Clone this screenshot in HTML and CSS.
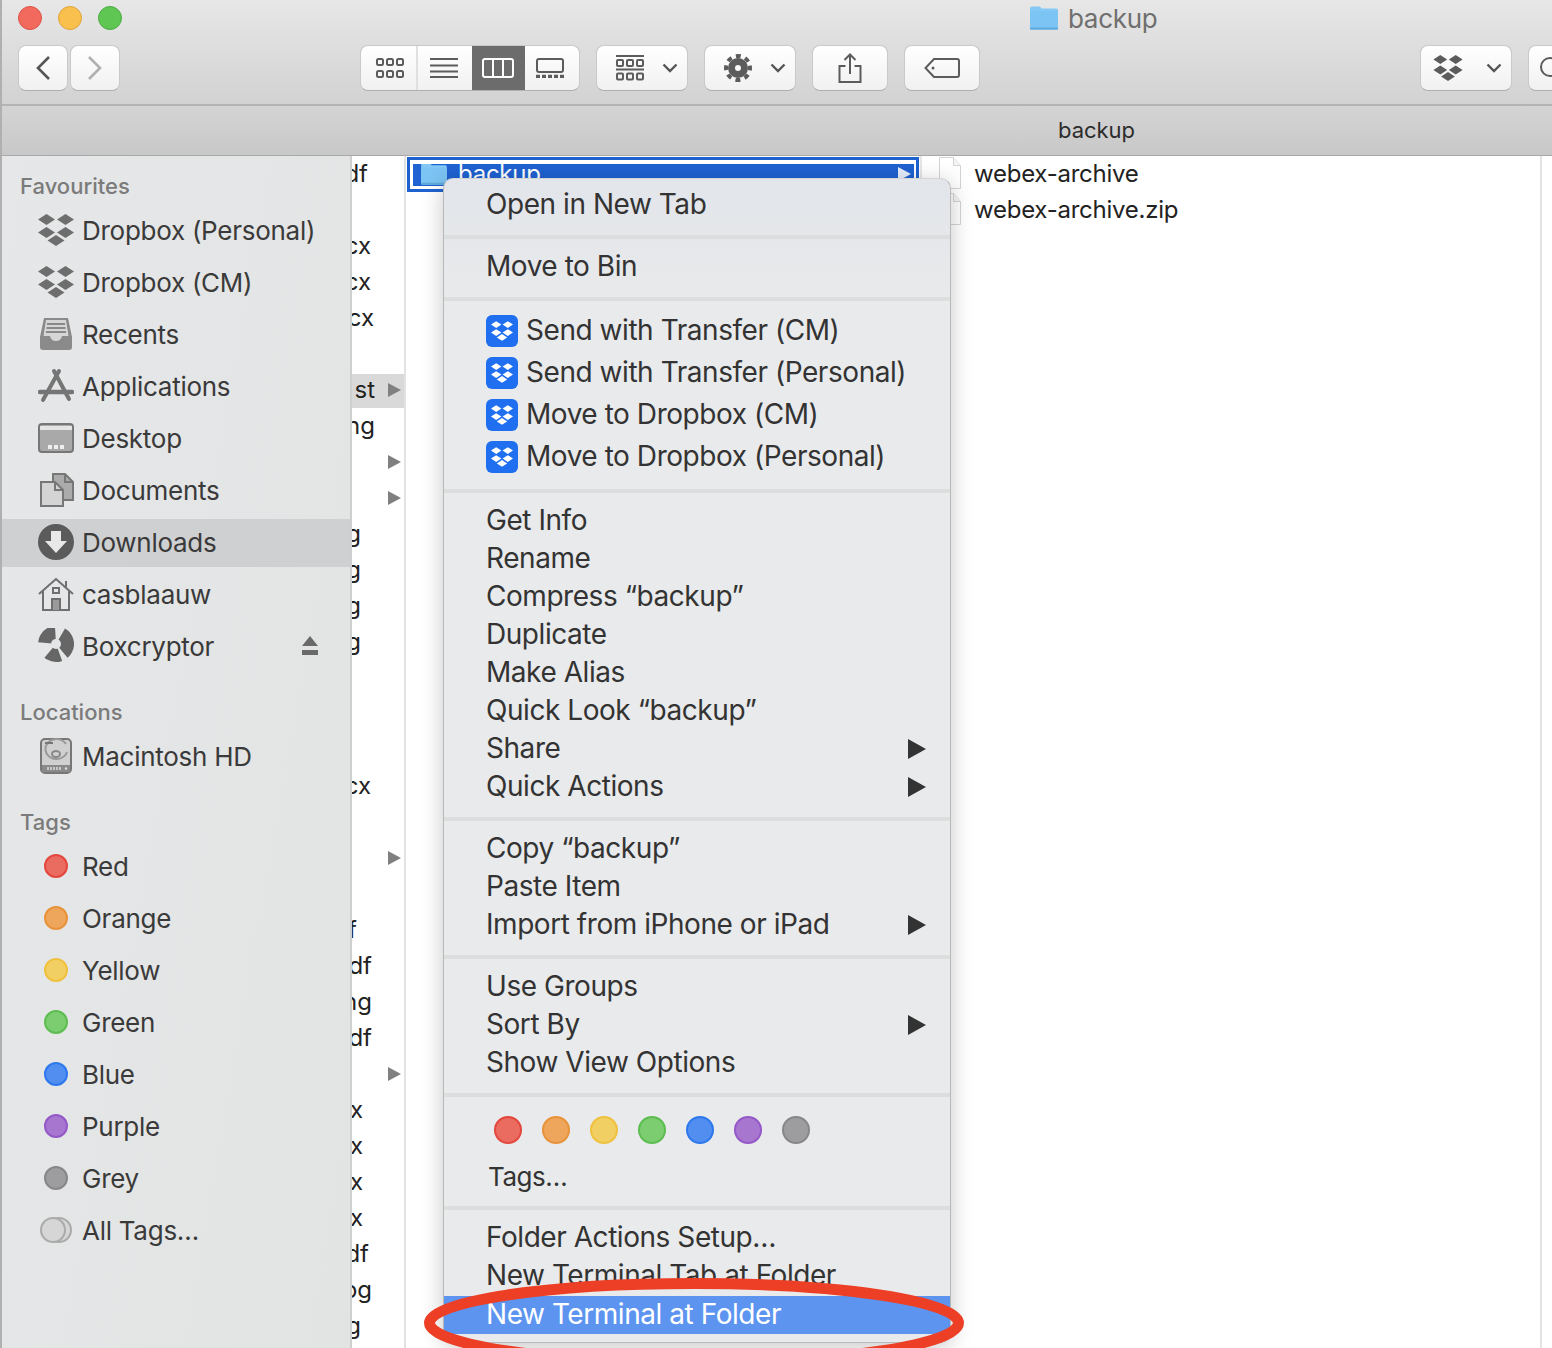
FILE: index.html
```html
<!DOCTYPE html>
<html lang="en">
<head>
  <meta charset="UTF-8">
  <meta name="viewport" content="width=device-width, initial-scale=1.0">
  <title>backup</title>
  <link rel="stylesheet" href="styles.css">
</head>
<body>
  <svg class="defs" aria-hidden="true">
    <symbol id="dbx" viewBox="0 0 36 32"><path d="M8.5 0 17 5.5 8.5 11 0 5.5ZM27.5 0 36 5.5 27.5 11 19 5.5ZM8.5 13 17 18.5 8.5 24 0 18.5ZM27.5 13 36 18.5 27.5 24 19 18.5ZM18 21 26.5 26.5 18 32 9.5 26.5Z"/></symbol>
    <symbol id="chev" viewBox="0 0 16 10"><path d="M1.5 1.5 8 8l6.5-6.5" fill="none" stroke="#555" stroke-width="2.4"/></symbol>
    <symbol id="folder" viewBox="0 0 30 24"><path d="M1 2.5Q1 .5 3 .5h7q1.500 0 2.500 2h15q1.500 0 1.500 2V22q0 1.500-1.500 1.500h-25Q1 23.500 1 22Z" fill="#84c9f5"/><path d="M1 5h28v17q0 1.500-1.500 1.500h-25Q1 23.500 1 22Z" fill="#7cc4f3"/><path d="M1 22.500h28" stroke="#5fa9dc" stroke-width="2"/></symbol>
    <symbol id="doc" viewBox="0 0 22 32"><path d="M.5.500h14l7 8v23H.5Z" fill="#fff" stroke="#d4d4d4"/><path d="M14.500.500v8h7" fill="#f4f4f4" stroke="#d4d4d4"/></symbol>
  </svg>

  <div class="window">
    <header class="toolbar">
      <div class="titlebar">
        <div class="lights">
          <span class="light light-red"></span>
          <span class="light light-yellow"></span>
          <span class="light light-green"></span>
        </div>
        <div class="title">
          <svg class="title-folder"><use href="#folder"/></svg>
          <span>backup</span>
        </div>
      </div>
      <div class="tools">
        <div class="nav">
          <button class="btn btn-nav">
            <svg width="16" height="26" viewBox="0 0 16 26"><path d="M14 2 3 13l11 11" fill="none" stroke="#555" stroke-width="2.600"/></svg>
          </button>
          <button class="btn btn-nav">
            <svg width="16" height="26" viewBox="0 0 16 26"><path d="M2 2l11 11L2 24" fill="none" stroke="#b0b0b0" stroke-width="2.600"/></svg>
          </button>
        </div>
        <div class="btn segs">
          <span class="seg seg-first">
            <svg width="28" height="20" viewBox="0 0 28 20" fill="none" stroke="#5c5c5c" stroke-width="2"><rect x="1" y="1" width="6" height="6" rx="1.500"/><rect x="11" y="1" width="6" height="6" rx="1.500"/><rect x="21" y="1" width="6" height="6" rx="1.500"/><rect x="1" y="13" width="6" height="6" rx="1.500"/><rect x="11" y="13" width="6" height="6" rx="1.500"/><rect x="21" y="13" width="6" height="6" rx="1.500"/></svg>
          </span>
          <span class="seg seg-list">
            <svg width="28" height="20" viewBox="0 0 28 20" stroke="#5c5c5c" stroke-width="2"><path d="M0 1h28M0 7.500h28M0 13.500h28M0 19h28"/></svg>
          </span>
          <span class="seg seg-active">
            <svg width="32" height="20" viewBox="0 0 32 20" fill="none" stroke="#fff" stroke-width="2"><rect x="1" y="1" width="30" height="18" rx="2"/><path d="M11 1v18M21 1v18"/></svg>
          </span>
          <span class="seg seg-last">
            <svg width="28" height="20" viewBox="0 0 28 20" fill="none" stroke="#5c5c5c" stroke-width="2"><rect x="1" y="1" width="26" height="13" rx="2"/><path d="M0 18.500h28" stroke-width="3.500" stroke-dasharray="4 2"/></svg>
          </span>
        </div>
        <button class="btn btn-menu btn-group">
          <svg width="28" height="26" viewBox="0 0 28 26" fill="none" stroke="#5c5c5c" stroke-width="2"><path d="M0 1h28M0 14.500h28"/><rect x="1" y="5" width="6" height="6" rx="1"/><rect x="11" y="5" width="6" height="6" rx="1"/><rect x="21" y="5" width="6" height="6" rx="1"/><rect x="1" y="18.500" width="6" height="6" rx="1"/><rect x="11" y="18.500" width="6" height="6" rx="1"/><rect x="21" y="18.500" width="6" height="6" rx="1"/></svg>
          <svg class="chev"><use href="#chev"/></svg>
        </button>
        <button class="btn btn-menu btn-gear">
          <svg width="28" height="28" viewBox="0 0 28 28"><circle cx="14" cy="14" r="6.500" fill="none" stroke="#5c5c5c" stroke-width="7"/><circle cx="14" cy="14" r="12" fill="none" stroke="#5c5c5c" stroke-width="4" stroke-dasharray="4.800 4.620" transform="rotate(-11.500 14 14)"/></svg>
          <svg class="chev"><use href="#chev"/></svg>
        </button>
        <button class="btn btn-share">
          <svg width="24" height="30" viewBox="0 0 24 30" fill="none" stroke="#5c5c5c" stroke-width="2"><path d="M7.500 13H1.500v16h21V13H16.500M12 21V2M6.500 7 12 1.500 17.500 7"/></svg>
        </button>
        <button class="btn btn-tag">
          <svg width="36" height="20" viewBox="0 0 36 20" fill="none" stroke="#5c5c5c" stroke-width="2"><path d="M10 1h23q2 0 2 2v14q0 2-2 2H10L1.500 10Z"/><circle cx="9" cy="10" r="1.500" fill="#5c5c5c" stroke="none"/></svg>
        </button>
        <button class="btn btn-menu btn-dropbox">
          <svg class="dbx-tool"><use href="#dbx"/></svg>
          <svg class="chev"><use href="#chev"/></svg>
        </button>
        <button class="btn btn-search">
          <svg width="24" height="24" viewBox="0 0 24 24"><circle cx="11" cy="11" r="9" fill="none" stroke="#5c5c5c" stroke-width="2"/></svg>
        </button>
      </div>
    </header>

    <div class="pathbar"><span>backup</span></div>

    <div class="main">
      <aside class="sidebar">
        <h3 class="side-head">Favourites</h3>
        <ul class="side-list">
          <li class="side-item"><svg class="side-ico dbx-side"><use href="#dbx"/></svg>Dropbox (Personal)</li>
          <li class="side-item"><svg class="side-ico dbx-side"><use href="#dbx"/></svg>Dropbox (CM)</li>
          <li class="side-item">
            <svg class="side-ico" viewBox="0 0 36 34"><path d="M6 1h24l4 19v10q0 3-3 3H5q-3 0-3-3V20Z" fill="#8a8a8a"/><path d="M8 3h20l2.500 16H24q-1 5-6 5t-6-5H5.500Z" fill="#d6d6d6"/><path d="M9 7h18M8.500 11h19M8 15h20" stroke="#8a8a8a" stroke-width="1.800"/></svg>Recents
          </li>
          <li class="side-item">
            <svg class="side-ico" viewBox="0 0 36 34" fill="none" stroke="#757575" stroke-linecap="round"><path d="M21 2 5 31M16 2l15 28" stroke-width="4"/><path d="M2 23h32" stroke-width="4.500"/></svg>Applications
          </li>
          <li class="side-item">
            <svg class="side-ico" viewBox="0 0 36 30"><rect x="1" y="1" width="34" height="28" rx="3" fill="#a9a9a9" stroke="#777" stroke-width="2"/><path d="M2 3h32v4H2Z" fill="#e4e4e4"/><path d="M10 22h4v4h-4ZM16 22h4v4h-4ZM22 22h4v4h-4Z" fill="#eee"/></svg>Desktop
          </li>
          <li class="side-item">
            <svg class="side-ico" viewBox="0 0 36 34" fill="#d4d4d4" stroke="#777" stroke-width="2"><path d="M15 1h12l8 8v18H15Z" fill="#ababab"/><path d="M3 9h14l8 8v16H3Z"/><path d="M27 1v8h8M17 9v8h8" fill="none"/></svg>Documents
          </li>
          <li class="side-item side-active">
            <svg class="side-ico" viewBox="0 0 36 36"><circle cx="18" cy="18" r="18" fill="#5b5b5b"/><path d="M13 7h10v10h6L18 29 7 17h6Z" fill="#e8e8e8"/></svg>Downloads
          </li>
          <li class="side-item">
            <svg class="side-ico" viewBox="0 0 36 34" fill="none" stroke="#6f6f6f" stroke-width="2"><path d="M1 17 18 2l17 15M5 14v19h26V14M28 10V4"/><rect x="15" y="11" width="6" height="5"/><path d="M14 33V22h8v11" fill="#9a9a9a"/></svg>casblaauw
          </li>
          <li class="side-item">
            <svg class="side-ico" viewBox="0 0 36 36"><circle cx="18" cy="16" r="11" fill="none" stroke="#666" stroke-width="14" stroke-dasharray="21 3.800 11.500 10.600 15.400 6.800" transform="rotate(-60 18 16)"/><circle cx="18" cy="16" r="5" fill="#e4e5e6"/></svg>Boxcryptor
            <svg class="eject" viewBox="0 0 16 20"><path d="M8 0l8 10H0ZM0 14h16v5H0Z" fill="#6a6a6a"/></svg>
          </li>
        </ul>
        <h3 class="side-head">Locations</h3>
        <ul class="side-list">
          <li class="side-item">
            <svg class="side-ico" viewBox="0 0 32 36"><rect x="1" y="1" width="30" height="34" rx="4" fill="#d0d0d0" stroke="#777" stroke-width="2"/><path d="M2 27h28v7H2Z" fill="#8a8a8a"/><path d="M8 29v3M11 29v3M14 29v3M17 29v3M20 29v3" stroke="#ddd" stroke-width="1.500"/><circle cx="26" cy="30.500" r="1.200" fill="#ddd"/><path d="M26 6a11 10 0 1 0 1 8" fill="none" stroke="#999" stroke-width="2"/><ellipse cx="16" cy="16" rx="4" ry="3" fill="none" stroke="#888" stroke-width="2"/><path d="M5 5h8" stroke="#777" stroke-width="2"/></svg>Macintosh HD
          </li>
        </ul>
        <h3 class="side-head">Tags</h3>
        <ul class="side-list">
          <li class="side-item"><span class="tag-slot"><span class="dot dot-side red"></span></span>Red</li>
          <li class="side-item"><span class="tag-slot"><span class="dot dot-side orange"></span></span>Orange</li>
          <li class="side-item"><span class="tag-slot"><span class="dot dot-side yellow"></span></span>Yellow</li>
          <li class="side-item"><span class="tag-slot"><span class="dot dot-side green"></span></span>Green</li>
          <li class="side-item"><span class="tag-slot"><span class="dot dot-side blue"></span></span>Blue</li>
          <li class="side-item"><span class="tag-slot"><span class="dot dot-side purple"></span></span>Purple</li>
          <li class="side-item"><span class="tag-slot"><span class="dot dot-side grey"></span></span>Grey</li>
          <li class="side-item">
            <svg class="side-ico" viewBox="0 0 36 28" fill="#d6d6d6" stroke="#aaa" stroke-width="2"><circle cx="21" cy="14" r="12"/><circle cx="15" cy="14" r="12"/></svg>All Tags…
          </li>
        </ul>
      </aside>

      <section class="col col-clip">
        <div class="clip-row end-38">df</div>
        <div class="clip-row"></div>
        <div class="clip-row end-35">cx</div>
        <div class="clip-row end-35">cx</div>
        <div class="clip-row end-32">cx</div>
        <div class="clip-row"></div>
        <div class="clip-row clip-active has-arrow">st<i class="arrow"></i></div>
        <div class="clip-row end-31">ng</div>
        <div class="clip-row has-arrow"><i class="arrow"></i></div>
        <div class="clip-row has-arrow"><i class="arrow"></i></div>
        <div class="clip-row end-45">g</div>
        <div class="clip-row end-45">g</div>
        <div class="clip-row end-45">g</div>
        <div class="clip-row end-45">g</div>
        <div class="clip-row"></div>
        <div class="clip-row"></div>
        <div class="clip-row"></div>
        <div class="clip-row end-35">cx</div>
        <div class="clip-row"></div>
        <div class="clip-row has-arrow"><i class="arrow"></i></div>
        <div class="clip-row"></div>
        <div class="clip-row end-49">f</div>
        <div class="clip-row end-34">df</div>
        <div class="clip-row end-34">ng</div>
        <div class="clip-row end-34">df</div>
        <div class="clip-row has-arrow"><i class="arrow"></i></div>
        <div class="clip-row end-43">x</div>
        <div class="clip-row end-43">x</div>
        <div class="clip-row end-43">x</div>
        <div class="clip-row end-43">x</div>
        <div class="clip-row end-37">df</div>
        <div class="clip-row end-34">og</div>
        <div class="clip-row end-45">g</div>
      </section>

      <section class="col col-selected">
        <div class="selected-row">
          <div class="selected-fill">
            <svg class="selected-folder"><use href="#folder"/></svg>
            <span>backup</span>
            <i class="arrow arrow-white"></i>
          </div>
        </div>
      </section>

      <section class="col col-files">
        <div class="file"><svg class="file-ico"><use href="#doc"/></svg>webex-archive</div>
        <div class="file"><svg class="file-ico"><use href="#doc"/></svg>webex-archive.zip</div>
      </section>

      <div class="col-end"></div>
    </div>

    <nav class="menu">
      <div class="menu-group menu-group-first">
        <div class="menu-item">Open in New Tab</div>
      </div>
      <div class="menu-group">
        <div class="menu-item">Move to Bin</div>
      </div>
      <div class="menu-group">
        <div class="menu-item menu-item-icon"><span class="dbx-badge"><svg><use href="#dbx"/></svg></span>Send with Transfer (CM)</div>
        <div class="menu-item menu-item-icon"><span class="dbx-badge"><svg><use href="#dbx"/></svg></span>Send with Transfer (Personal)</div>
        <div class="menu-item menu-item-icon"><span class="dbx-badge"><svg><use href="#dbx"/></svg></span>Move to Dropbox (CM)</div>
        <div class="menu-item menu-item-icon"><span class="dbx-badge"><svg><use href="#dbx"/></svg></span>Move to Dropbox (Personal)</div>
      </div>
      <div class="menu-group">
        <div class="menu-item">Get Info</div>
        <div class="menu-item">Rename</div>
        <div class="menu-item">Compress “backup”</div>
        <div class="menu-item">Duplicate</div>
        <div class="menu-item">Make Alias</div>
        <div class="menu-item">Quick Look “backup”</div>
        <div class="menu-item has-sub">Share</div>
        <div class="menu-item has-sub">Quick Actions</div>
      </div>
      <div class="menu-group">
        <div class="menu-item">Copy “backup”</div>
        <div class="menu-item">Paste Item</div>
        <div class="menu-item has-sub">Import from iPhone or iPad</div>
      </div>
      <div class="menu-group">
        <div class="menu-item">Use Groups</div>
        <div class="menu-item has-sub">Sort By</div>
        <div class="menu-item">Show View Options</div>
      </div>
      <div class="menu-group menu-group-tags">
        <div class="menu-dots">
          <span class="dot red"></span>
          <span class="dot orange"></span>
          <span class="dot yellow"></span>
          <span class="dot green"></span>
          <span class="dot blue"></span>
          <span class="dot purple"></span>
          <span class="dot grey"></span>
        </div>
        <div class="menu-item menu-item-tags">Tags…</div>
      </div>
      <div class="menu-group menu-group-last">
        <div class="menu-item">Folder Actions Setup…</div>
        <div class="menu-item">New Terminal Tab at Folder</div>
        <div class="menu-item menu-item-hover">New Terminal at Folder</div>
      </div>
    </nav>

    <svg class="circled" viewBox="0 0 560 100">
      <ellipse cx="280" cy="50" rx="264.500" ry="39.500" fill="none" stroke="#ec3f26" stroke-width="11"/>
    </svg>
  </div>
</body>
</html>
```

FILE: styles.css
```css
* {
  box-sizing: border-box;
}

body {
  margin: 0;
  font-family: Inter, "Liberation Sans", sans-serif;
  color: #333;
}

ul {
  list-style: none;
  margin: 0;
  padding: 0;
}

.defs {
  display: none;
}

.window {
  position: relative;
  width: 1552px;
  height: 1348px;
  overflow: hidden;
  display: flex;
  flex-direction: column;
  background: #fff;
}

/* toolbar */
.toolbar {
  height: 106px;
  flex: none;
  background: linear-gradient(#e7e7e7, #d2d2d2);
  border-bottom: 2px solid #b4b4b4;
  border-left: 2px solid #b0b0b0;
}

.titlebar {
  height: 37px;
  padding: 6px 0 0 16px;
  display: flex;
}

.lights {
  display: flex;
  gap: 16px;
}

.light {
  width: 24px;
  height: 24px;
  border-radius: 50%;
}

.light-red {
  background: #f2695e;
  border: 1px solid #dd5248;
}

.light-yellow {
  background: #f9c04d;
  border: 1px solid #dfa33a;
}

.light-green {
  background: #5fc653;
  border: 1px solid #4dac42;
}

.title {
  margin-left: 907px;
  display: flex;
  align-items: center;
  gap: 9px;
  height: 24px;
  font-size: 26px;
  letter-spacing: -0.3px;
  color: #6f6f6f;
}

.title-folder {
  width: 30px;
  height: 24px;
}

.tools {
  margin-top: 8px;
  padding-left: 16px;
  display: flex;
  gap: 16px;
}

.nav {
  display: flex;
  gap: 2px;
}

.btn {
  flex: none;
  height: 46px;
  padding: 0;
  display: flex;
  align-items: center;
  justify-content: center;
  background: linear-gradient(#fff, #f1f1f1);
  border: 1px solid #c9c9c9;
  border-bottom-color: #b0b0b0;
  border-radius: 8px;
}

.btn-nav {
  width: 50px;
}

.segs {
  width: 220px;
  margin-left: 224px;
  overflow: hidden;
  align-items: stretch;
}

.seg {
  width: 54px;
  display: flex;
  align-items: center;
  justify-content: center;
}

.seg-first {
  width: 57px;
  padding-left: 4px;
  border-right: 2px solid #e0e0e0;
}

.seg-list {
  padding-right: 2px;
}

.seg-active {
  background: #6c6c6c;
}

.seg-last {
  padding-right: 4px;
}

.btn-menu {
  justify-content: space-between;
  padding: 0 9px 0 19px;
}

.btn-group {
  width: 92px;
}

.btn-gear {
  width: 92px;
}

.chev {
  width: 16px;
  height: 10px;
}

.btn-share {
  width: 76px;
}

.btn-tag {
  width: 76px;
}

.btn-dropbox {
  width: 92px;
  margin-left: 424px;
  padding-left: 11px;
}

.dbx-tool {
  width: 32px;
  height: 26px;
  fill: #5c5c5c;
}

.btn-search {
  width: 60px;
  padding-right: 10px;
  justify-content: flex-start;
  padding-left: 10px;
}

/* path bar */
.pathbar {
  height: 50px;
  flex: none;
  padding: 0 0 2px 1056px;
  display: flex;
  align-items: center;
  font-size: 22px;
  letter-spacing: -0.05px;
  color: #2c2c2c;
  background: linear-gradient(#d4d4d4, #c8c8c8);
  border-bottom: 1px solid #a9a9a9;
  border-left: 2px solid #b0b0b0;
}

/* columns */
.main {
  flex: 1;
  display: flex;
  min-height: 0;
}

.sidebar {
  width: 350px;
  flex: none;
  padding-top: 15px;
  background: linear-gradient(100deg, #e6e7e8, #e2e3e3);
  border-left: 2px solid #b0b0b0;
  color: #3a3a3a;
}

.side-head {
  height: 30px;
  margin: 26px 0 6px;
  padding-left: 18px;
  font-size: 22px;
  font-weight: 500;
  line-height: 30px;
  color: #7b7b7b;
}

.side-head:first-child {
  margin-top: 0;
}

.side-list {
  display: flex;
  flex-direction: column;
  gap: 4px;
}

.side-item {
  height: 48px;
  padding: 0 0 2px 36px;
  display: flex;
  align-items: center;
  gap: 8px;
  font-size: 26px;
  letter-spacing: -0.27px;
}

.side-active {
  background: #cfd0d1;
}

.side-ico {
  width: 36px;
  height: 36px;
  flex: none;
}

.dbx-side {
  fill: #6e6e6e;
}

.eject {
  width: 16px;
  height: 20px;
  margin-left: auto;
  margin-right: 32px;
}

.tag-slot {
  width: 36px;
  display: flex;
  justify-content: center;
}

.dot {
  width: 28px;
  height: 28px;
  border-radius: 50%;
  border: 2px solid;
}

.dot-side {
  width: 24px;
  height: 24px;
}

.red {
  background: #ea6b60;
  border-color: #e3473d;
}

.orange {
  background: #eea55c;
  border-color: #e8923a;
}

.yellow {
  background: #f2cf63;
  border-color: #f0c13f;
}

.green {
  background: #7ccc70;
  border-color: #5cbd50;
}

.blue {
  background: #528df0;
  border-color: #2e78ee;
}

.purple {
  background: #a777cf;
  border-color: #9458c8;
}

.grey {
  background: #9d9da0;
  border-color: #87878a;
}

.col {
  flex: none;
  min-height: 0;
}

.col-clip {
  width: 56px;
  overflow: hidden;
  border-left: 2px solid #cfcfcf;
  border-right: 2px solid #e2e2e2;
  font-size: 24px;
  color: #222;
}

.clip-row {
  height: 36px;
  line-height: 34px;
  display: flex;
  justify-content: flex-end;
  align-items: center;
}

.end-31 { padding-right: 29px; }
.end-32 { padding-right: 30px; }
.end-34 { padding-right: 32px; }
.end-35 { padding-right: 33px; }
.end-37 { padding-right: 35px; }
.end-38 { padding-right: 36px; }
.end-43 { padding-right: 41px; }
.end-45 { padding-right: 43px; }
.end-49 { padding-right: 47px; }

.has-arrow {
  padding-right: 3px;
  gap: 13px;
}

.clip-active {
  padding-bottom: 2px;
  background: #d9d9d9;
  background-clip: padding-box;
  border-top: 2px solid transparent;
}

.arrow {
  width: 0;
  height: 0;
  border-left: 13px solid #808080;
  border-top: 7px solid transparent;
  border-bottom: 7px solid transparent;
}

.col-selected {
  width: 516px;
  padding: 1px 1px 0 1px;
  border-right: 2px solid #e6e6e6;
}

.selected-row {
  height: 35px;
  padding: 4px 2px 3px 3px;
  border: 3px solid #1e62d0;
}

.selected-fill {
  height: 100%;
  overflow: hidden;
  padding: 0 0 2px 6px;
  display: flex;
  align-items: center;
  gap: 9px;
  background: #1f62d2;
  color: #fff;
  font-size: 24px;
  letter-spacing: -0.25px;
  line-height: 1;
}

.selected-folder {
  width: 30px;
  height: 22px;
  flex: none;
}

.arrow-white {
  margin-left: auto;
  margin-right: 3px;
  border-left-color: #e6eefb;
}

.col-files {
  width: 620px;
  border-right: 2px solid #e3e3e3;
  font-size: 24px;
  letter-spacing: -0.25px;
  color: #222;
}

.file {
  height: 36px;
  padding: 0 0 2px 17px;
  display: flex;
  align-items: center;
  gap: 13px;
}

.file-ico {
  width: 22px;
  height: 32px;
}

.col-end {
  flex: 1;
}

/* context menu */
.menu {
  position: absolute;
  left: 443px;
  top: 178px;
  width: 508px;
  height: 1165px;
  padding-top: 7px;
  background: linear-gradient(#e2e5ea, #e9eaeb 130px);
  border: 1px solid #b9b9b9;
  border-top-color: #d4d4d4;
  border-radius: 10px;
  box-shadow: 0 4px 22px rgba(0, 0, 0, 0.22);
  font-size: 28px;
  letter-spacing: -0.45px;
  color: #333;
}

.menu-group {
  padding: 9px 0 11px;
  border-bottom: 4px solid #dcdddd;
}

.menu-group-first {
  padding-top: 0;
}

.menu-group-last {
  padding-top: 9px;
  border-bottom: none;
}

.menu-group-tags {
  padding-bottom: 10px;
}

.menu-item {
  position: relative;
  height: 38px;
  padding: 0 0 2px 42px;
  display: flex;
  align-items: center;
  white-space: nowrap;
}

.menu-item-icon {
  height: 42px;
  gap: 8px;
}

.menu-item-tags {
  padding-left: 44px;
  font-size: 26px;
}

.menu-item-hover {
  margin-top: 1px;
  background: #5c94ef;
  color: #fff;
}

.has-sub::after {
  content: "";
  position: absolute;
  right: 24px;
  top: 9px;
  border-left: 18px solid #333;
  border-top: 10px solid transparent;
  border-bottom: 10px solid transparent;
}

.dbx-badge {
  width: 32px;
  height: 32px;
  margin-top: 2px;
  flex: none;
  display: flex;
  align-items: center;
  justify-content: center;
  background: #1f6ff0;
  border-radius: 6px;
}

.dbx-badge svg {
  width: 22px;
  height: 20px;
  fill: #fff;
}

.menu-dots {
  height: 52px;
  padding: 10px 0 0 50px;
  display: flex;
  gap: 20px;
}

.menu-dots .dot {
  flex: none;
}

/* red marker drawn over the screenshot */
.circled {
  position: absolute;
  left: 414px;
  top: 1273px;
  width: 560px;
  height: 100px;
}
```
